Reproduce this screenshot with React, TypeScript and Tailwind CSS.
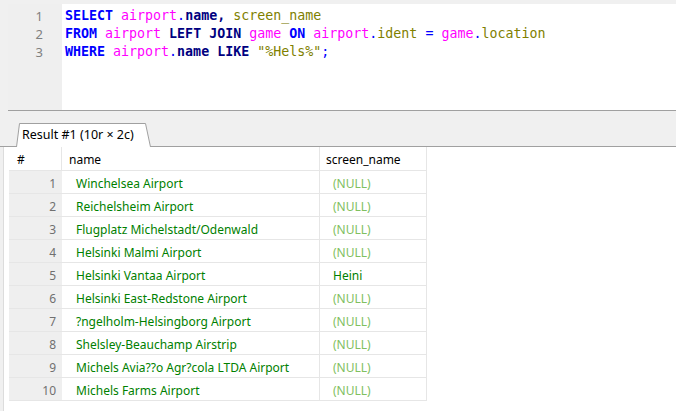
import React from "react";

const rows: [string, string | null][] = [
  ["Winchelsea Airport", null],
  ["Reichelsheim Airport", null],
  ["Flugplatz Michelstadt/Odenwald", null],
  ["Helsinki Malmi Airport", null],
  ["Helsinki Vantaa Airport", "Heini"],
  ["Helsinki East-Redstone Airport", null],
  ["?ngelholm-Helsingborg Airport", null],
  ["Shelsley-Beauchamp Airstrip", null],
  ["Michels Avia??o Agr?cola LTDA Airport", null],
  ["Michels Farms Airport", null],
];

const K = ({ c }: { c: string }) => <span className="text-[#0000ff] font-bold">{c}</span>;
const N = ({ c }: { c: string }) => <span className="text-[#000080] font-bold">{c}</span>;
const T = ({ c }: { c: string }) => <span className="text-[#ff00ff]">{c}</span>;
const C = ({ c }: { c: string }) => <span className="text-[#808000]">{c}</span>;
const S = ({ c }: { c: string }) => <span className="text-[#0000ff]">{c}</span>;

export default function App() {
  return (
    <div
      className="w-[676px] h-[411px] bg-[#f0f0f0] overflow-hidden flex flex-col"
      style={{ fontFamily: '"Noto Sans", "Open Sans", sans-serif' }}
    >
      <div className="h-[4px] shrink-0" />
      {/* Editor */}
      <div className="flex h-[107px] shrink-0 ml-[8px] border-b border-[#a0a0a0] bg-white">
        <div className="w-[54px] bg-[#efefef] flex flex-col items-end pr-[19px] pt-[3px] text-[13px] leading-[18px] text-[#808080]">
          <div>1</div>
          <div>2</div>
          <div>3</div>
        </div>
        <div
          className="pl-[3px] pt-[3px] text-[13.3px] leading-[18px] whitespace-pre"
          style={{ fontFamily: '"DejaVu Sans Mono", "Liberation Mono", monospace' }}
        >
          <div>
            <K c="SELECT" /> <T c="airport" />
            <S c="." />
            <N c="name" />
            <N c="," /> <C c="screen_name" />
          </div>
          <div>
            <K c="FROM" /> <T c="airport" /> <N c="LEFT" /> <N c="JOIN" /> <T c="game" /> <K c="ON" />{" "}
            <T c="airport" />
            <S c="." />
            <C c="ident" /> <S c="=" /> <T c="game" />
            <S c="." />
            <C c="location" />
          </div>
          <div>
            <K c="WHERE" /> <T c="airport" />
            <S c="." />
            <N c="name" /> <N c="LIKE" /> <C c={'"%Hels%"'} />
            <S c=";" />
          </div>
        </div>
      </div>
      {/* Tab strip */}
      <div className="h-[36px] shrink-0 flex items-end border-b border-[#a0a0a0] pl-[16px]">
        <div className="relative -mb-px h-[24px] w-[135px] flex items-center pl-[6px] pt-[1px] text-[12.5px] text-black">
          <svg className="absolute left-0 top-0" width="135" height="24" viewBox="0 0 135 24">
            <path d="M0.5 24 L3.5 0.5 L129.5 0.5 L134.5 24" fill="#ffffff" stroke="#a0a0a0" strokeWidth="1" />
          </svg>
          <span className="relative">Result #1 (10r × 2c)</span>
        </div>
      </div>
      {/* Results */}
      <div className="flex-1 ml-[3px] border-l border-[#dcdcdc] bg-white pl-[5px]">
        <div className="grid grid-cols-[53px_258px_107px] text-[12px] leading-none">
          <div className="h-[24px] flex items-center pt-[3px] pl-[8px] text-black border-r border-b border-[#e6e6e6]">#</div>
          <div className="h-[24px] flex items-center pt-[3px] pl-[7px] text-black border-r border-b border-[#e6e6e6]">
            name
          </div>
          <div className="h-[24px] flex items-center pt-[3px] pl-[6px] text-black border-r border-b border-[#e6e6e6]">
            screen_name
          </div>
          {rows.map(([name, sn], i) => (
            <React.Fragment key={i}>
              <div className="h-[23px] flex items-center justify-end pt-[3px] pr-[6px] bg-[#efefef] text-[#707070] border-b border-[#e6e6e6]">
                {i + 1}
              </div>
              <div className="h-[23px] flex items-center pt-[3px] pl-[14px] text-[#008000] border-r border-b border-[#e6e6e6]">
                {name}
              </div>
              <div
                className={`h-[23px] flex items-center pt-[3px] pl-[13px] border-r border-b border-[#e6e6e6] ${
                  sn ? "text-[#008000]" : "text-[#80c060]"
                }`}
              >
                {sn ?? "(NULL)"}
              </div>
            </React.Fragment>
          ))}
        </div>
      </div>
    </div>
  );
}
